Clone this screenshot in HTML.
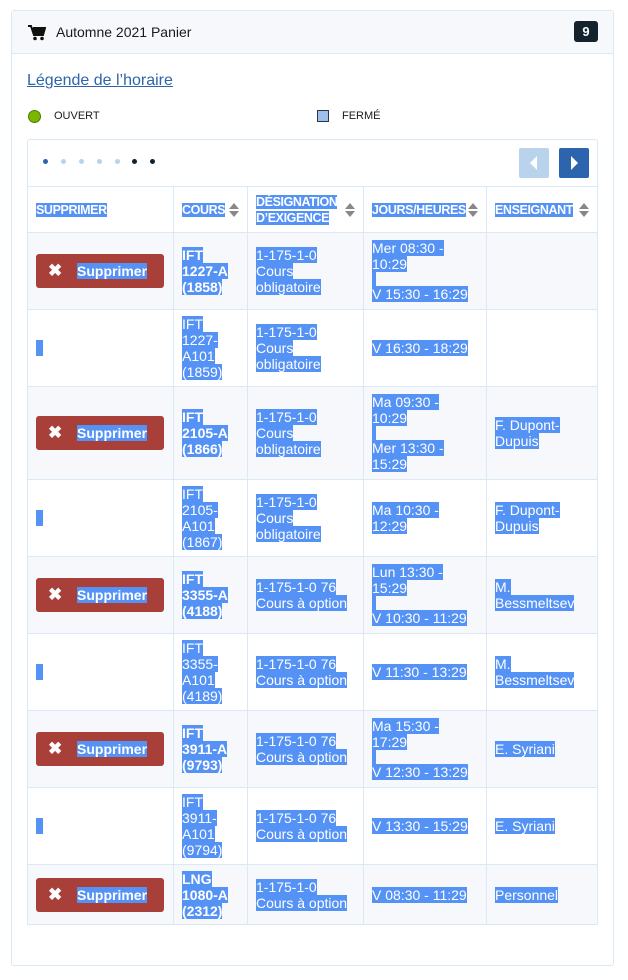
<!DOCTYPE html>
<html><head><meta charset="utf-8"><style>
*{box-sizing:border-box;margin:0;padding:0}
body{width:628px;height:980px;background:#fff;font-family:"Liberation Sans",sans-serif;color:#1a1a1a;position:relative;overflow:hidden}
.card{position:absolute;left:11px;top:10px;width:603px;height:956px;border:1px solid #dbe8f5;border-radius:3px}
.hdr{height:43px;background:#f6f8fb;border-bottom:1px solid #dbe8f5;position:relative}
.hdr .t{position:absolute;left:44px;top:13px;font-size:14px}
.badge{position:absolute;right:15px;top:10px;width:24px;height:21px;background:#13222d;color:#fff;border-radius:3px;font-weight:bold;font-size:13px;text-align:center;line-height:21px}
.lg{position:absolute;left:27px;top:72px;font-size:16px;color:#2c65ad;text-decoration:underline}
.leg{position:absolute;top:110px;font-size:11px}
.box{position:absolute;left:27px;top:139px;width:571px;height:786px;border:1px solid #dbe8f5;border-radius:3px}
.dot{position:absolute;top:159px;width:5px;height:5px;border-radius:50%}
table{position:absolute;left:27px;top:186px;border-collapse:collapse;table-layout:fixed;width:570px}
td,th{border:1px solid #dbe8f5;vertical-align:middle;padding:0 8px;font-size:14px;line-height:16px;text-align:left}
th{height:46px;font-size:12.5px;font-weight:bold;line-height:16px;position:relative}
tr.o td{background:#f6f8fb}
.s{background:#5592f5;color:#fff}
th .s{letter-spacing:-0.4px}
.ar{position:absolute;right:7px;top:15px;width:12px;height:16px}
.bar{display:block;width:4px;height:14px;background:#5592f5}
.btn{width:128px;height:34px;background:#a83f39;border-radius:3px;position:relative;color:#fff;font-weight:bold;font-size:14px}
.btn .x{position:absolute;left:12px;top:9px;font-size:17px;line-height:16px}
.btn .s{position:absolute;left:41px;top:9px;line-height:16px}
</style></head><body>
<div class="card">
<div class="hdr">
<svg style="position:absolute;left:16px;top:14px" width="18" height="16" viewBox="0 0 18 16"><path d="M0 1h3l3 9h9l2-7H5" fill="none" stroke="#111" stroke-width="2"/><path d="M4 3h13l-2 7H6z" fill="#111"/><circle cx="7" cy="13.5" r="1.8" fill="#111"/><circle cx="14" cy="13.5" r="1.8" fill="#111"/></svg>
<span class="t">Automne 2021 Panier</span><span class="badge">9</span></div>
</div>
<div class="lg">Légende de l’horaire</div>
<div style="position:absolute;left:28px;top:110px;width:13px;height:13px;border-radius:50%;background:#7ab800;border:1px solid #4a7a00"></div>
<div class="leg" style="left:54px">OUVERT</div>
<div style="position:absolute;left:317px;top:110px;width:12px;height:12px;background:#9dbfed;border:1px solid #334"></div>
<div class="leg" style="left:342px">FERMÉ</div>
<div class="box"></div>
<div class="dot" style="left:43px;background:#2c65ad"></div>
<div class="dot" style="left:61px;background:#b9d3ec"></div>
<div class="dot" style="left:79px;background:#b9d3ec"></div>
<div class="dot" style="left:97px;background:#b9d3ec"></div>
<div class="dot" style="left:115px;background:#b9d3ec"></div>
<div class="dot" style="left:132px;background:#13222d"></div>
<div class="dot" style="left:150px;background:#13222d"></div>
<div style="position:absolute;left:519px;top:148px;width:30px;height:30px;background:#b9d3ec;border-radius:2px"><svg width="30" height="30"><path d="M18 8v14l-7-7z" fill="#fff"/></svg></div>
<div style="position:absolute;left:559px;top:148px;width:30px;height:30px;background:#2c65ad;border-radius:2px"><svg width="30" height="30"><path d="M12 8v14l7-7z" fill="#fff"/></svg></div>
<table>
<colgroup><col style="width:146px"><col style="width:74px"><col style="width:116px"><col style="width:123px"><col style="width:111px"></colgroup>
<tr><th><span class="s">SUPPRIMER</span></th><th><span class="s">COURS</span><svg class="ar" viewBox="0 0 12 16"><path d="M1 7l5-6 5 6zM1 9l5 6 5-6z" fill="#888"/></svg></th><th><span class="s">DÉSIGNATION<br>D’EXIGENCE</span><svg class="ar" viewBox="0 0 12 16"><path d="M1 7l5-6 5 6zM1 9l5 6 5-6z" fill="#888"/></svg></th><th><span class="s">JOURS/HEURES</span><svg class="ar" viewBox="0 0 12 16"><path d="M1 7l5-6 5 6zM1 9l5 6 5-6z" fill="#888"/></svg></th><th><span class="s">ENSEIGNANT</span><svg class="ar" viewBox="0 0 12 16"><path d="M1 7l5-6 5 6zM1 9l5 6 5-6z" fill="#888"/></svg></th></tr>
<tr class="o" style="height:77px"><td><div class="btn"><span class="x">✖</span><span class="s">Supprimer</span></div></td><td><b><span class="s">IFT<br>1227-A<br>(1858)</span></b></td><td><span class="s">1-175-1-0<br>Cours<br>obligatoire</span></td><td><span class="s">Mer 08:30 -<br>10:29</span><span class="bar"></span><span class="s">V 15:30 - 16:29</span></td><td></td></tr>
<tr style="height:77px"><td><span class="bar" style="height:16px;width:7px"></span></td><td><span class="s">IFT<br>1227-<br>A101<br>(1859)</span></td><td><span class="s">1-175-1-0<br>Cours<br>obligatoire</span></td><td><span class="s">V 16:30 - 18:29</span></td><td></td></tr>
<tr class="o" style="height:93px"><td><div class="btn"><span class="x">✖</span><span class="s">Supprimer</span></div></td><td><b><span class="s">IFT<br>2105-A<br>(1866)</span></b></td><td><span class="s">1-175-1-0<br>Cours<br>obligatoire</span></td><td><span class="s">Ma 09:30 -<br>10:29</span><span class="bar" style="height:14px"></span><span class="s">Mer 13:30 -<br>15:29</span></td><td><span class="s">F. Dupont-<br>Dupuis</span></td></tr>
<tr style="height:77px"><td><span class="bar" style="height:16px;width:7px"></span></td><td><span class="s">IFT<br>2105-<br>A101<br>(1867)</span></td><td><span class="s">1-175-1-0<br>Cours<br>obligatoire</span></td><td><span class="s">Ma 10:30 -<br>12:29</span></td><td><span class="s">F. Dupont-<br>Dupuis</span></td></tr>
<tr class="o" style="height:77px"><td><div class="btn"><span class="x">✖</span><span class="s">Supprimer</span></div></td><td><b><span class="s">IFT<br>3355-A<br>(4188)</span></b></td><td><span class="s">1-175-1-0 76<br>Cours à option</span></td><td><span class="s">Lun 13:30 -<br>15:29</span><span class="bar"></span><span class="s">V 10:30 - 11:29</span></td><td><span class="s">M.<br>Bessmeltsev</span></td></tr>
<tr style="height:77px"><td><span class="bar" style="height:16px;width:7px"></span></td><td><span class="s">IFT<br>3355-<br>A101<br>(4189)</span></td><td><span class="s">1-175-1-0 76<br>Cours à option</span></td><td><span class="s">V 11:30 - 13:29</span></td><td><span class="s">M.<br>Bessmeltsev</span></td></tr>
<tr class="o" style="height:77px"><td><div class="btn"><span class="x">✖</span><span class="s">Supprimer</span></div></td><td><b><span class="s">IFT<br>3911-A<br>(9793)</span></b></td><td><span class="s">1-175-1-0 76<br>Cours à option</span></td><td><span class="s">Ma 15:30 -<br>17:29</span><span class="bar"></span><span class="s">V 12:30 - 13:29</span></td><td><span class="s">E. Syriani</span></td></tr>
<tr style="height:77px"><td><span class="bar" style="height:16px;width:7px"></span></td><td><span class="s">IFT<br>3911-<br>A101<br>(9794)</span></td><td><span class="s">1-175-1-0 76<br>Cours à option</span></td><td><span class="s">V 13:30 - 15:29</span></td><td><span class="s">E. Syriani</span></td></tr>
<tr class="o" style="height:60px"><td><div class="btn"><span class="x">✖</span><span class="s">Supprimer</span></div></td><td><b><span class="s">LNG<br>1080-A<br>(2312)</span></b></td><td><span class="s">1-175-1-0<br>Cours à option</span></td><td><span class="s">V 08:30 - 11:29</span></td><td><span class="s">Personnel</span></td></tr>
</table>
</body></html>
